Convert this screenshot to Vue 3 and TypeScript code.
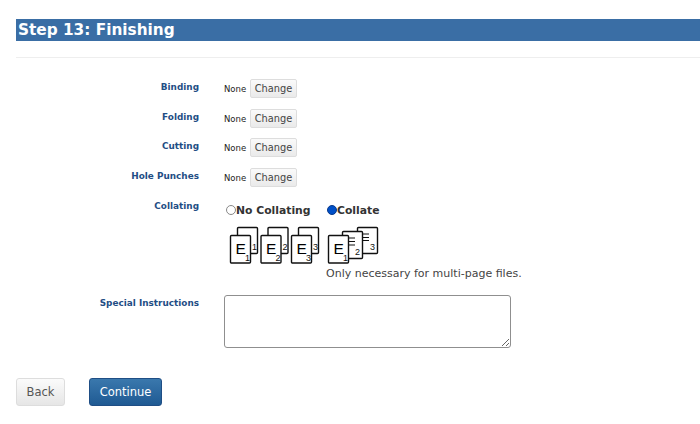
<template>
  <div class="page">
    <h2 class="step-title">Step 13: Finishing</h2>
    <hr class="divider" />

    <form class="form" @submit.prevent>
      <div v-for="opt in options" :key="opt" class="row">
        <label class="row-label">{{ opt }}</label>
        <div class="row-value">
          <span class="none">None</span>
          <button type="button" class="btn-change">Change</button>
        </div>
      </div>

      <div class="row row-collate">
        <label class="row-label">Collating</label>
        <div class="collate">
          <div class="collate-opt">
            <label class="radio-label"><span class="radio"></span>No Collating</label>
            <svg class="pages" width="92" height="39" viewBox="0 0 92 39">
              <g v-for="(n, i) in [1, 2, 3]" :key="n" :transform="`translate(${i * 30.5} 0)`">
                <rect class="sheet" x="8.5" y="1.5" width="20" height="26" rx="1" />
                <text class="num" x="23" y="24">{{ n }}</text>
                <rect class="sheet" x="1.5" y="9.5" width="20" height="27.5" rx="1" />
                <text class="big" x="6.5" y="28">E</text>
                <text class="num" x="16" y="35">{{ n }}</text>
              </g>
            </svg>
          </div>
          <div class="collate-opt">
            <label class="radio-label"><span class="radio on"></span>Collate</label>
            <svg class="pages" width="52" height="39" viewBox="0 0 52 39">
              <rect class="sheet" x="30.5" y="1.5" width="20" height="26" rx="1" />
              <path class="line" d="M36 8h6M36 11.5h6M36 14.5h6" />
              <text class="num" x="43" y="24">3</text>
              <rect class="sheet" x="15.5" y="5.5" width="20" height="27" rx="1" />
              <path class="line" d="M22 12h6M22 15.5h6M22 19h6" />
              <text class="num" x="28" y="29">2</text>
              <rect class="sheet" x="1.5" y="9.5" width="20" height="27.5" rx="1" />
              <text class="big" x="6.5" y="28">E</text>
              <text class="num" x="16" y="35">1</text>
            </svg>
            <p class="note">Only necessary for multi-page files.</p>
          </div>
        </div>
      </div>

      <div class="row row-notes">
        <label class="row-label">Special Instructions</label>
        <textarea class="notes"></textarea>
      </div>

      <div class="actions">
        <button type="button" class="btn btn-back">Back</button>
        <button type="submit" class="btn btn-continue">Continue</button>
      </div>
    </form>
  </div>
</template>

<script setup lang="ts">
const options: string[] = ['Binding', 'Folding', 'Cutting', 'Hole Punches']
</script>

<style>
html,
body {
  background: #ffffff;
}
</style>

<style scoped>
.page {
  width: 700px;
  height: 424px;
  overflow: hidden;
  padding: 19px 0 0 16px;
  box-sizing: border-box;
  font-family: 'DejaVu Sans', Verdana, sans-serif;
  color: #222222;
}

.step-title {
  margin: 0;
  height: 22px;
  line-height: 23px;
  padding-left: 2px;
  background: #3a6ea5;
  color: #ffffff;
  font-size: 15.3px;
  font-weight: 700;
}

.divider {
  height: 1px;
  margin: 16px 0 0;
  border: 0;
  background: #eeeeee;
}

.form {
  padding-top: 21px;
}

.row {
  display: grid;
  grid-template-columns: 183px minmax(0, 1fr);
  column-gap: 25px;
  height: 29.7px;
}

.row-label {
  text-align: right;
  font-size: 8.9px;
  font-weight: 700;
  line-height: 17px;
  color: #1f4e85;
}

.row-value {
  display: flex;
  align-items: flex-start;
  gap: 4px;
}

.none {
  width: 22px;
  white-space: nowrap;
  font-size: 8.5px;
  line-height: 21px;
  color: #222222;
}

.btn-change {
  width: 47px;
  height: 19px;
  padding: 0;
  border: 1px solid #dddddd;
  border-radius: 2px;
  background: linear-gradient(#fafafa, #eaeaea);
  font-family: inherit;
  font-size: 9.8px;
  color: #444444;
}

.row-collate {
  height: 97px;
}

.collate {
  display: flex;
  gap: 6px;
  padding: 4px 0 0 2px;
}

.radio-label {
  display: flex;
  align-items: center;
  height: 18px;
  font-size: 10.8px;
  font-weight: 700;
  color: #333333;
}

.radio {
  width: 10px;
  height: 10px;
  box-sizing: border-box;
  border: 1px solid #888888;
  border-radius: 50%;
  margin-top: -2px;
}

.radio.on {
  border-color: #0a3a8a;
  background: #0050c8;
}

.pages {
  display: block;
  margin: 6px 0 0 3px;
}

.collate-opt:last-child .pages {
  margin-left: 0;
}

.sheet {
  fill: #ffffff;
  stroke: #111111;
  stroke-width: 1.4;
}

.line {
  stroke: #111111;
  stroke-width: 1.2;
  fill: none;
}

.big {
  font-family: 'Liberation Sans', Arial, sans-serif;
  font-size: 15.5px;
  fill: #000000;
}

.num {
  font-family: 'Liberation Sans', Arial, sans-serif;
  font-size: 9px;
  fill: #111111;
}

.note {
  margin: 2px 0 0 -1px;
  white-space: nowrap;
  font-size: 11px;
  color: #444444;
}

.row-notes {
  height: 83px;
}

.notes {
  width: 287px;
  height: 53px;
  box-sizing: border-box;
  border: 1px solid #8f8f8f;
  border-radius: 3px;
  margin: 0;
  display: block;
}

.actions {
  display: flex;
  gap: 24px;
}

.btn {
  height: 28px;
  border-radius: 3px;
  font-family: inherit;
  font-size: 11.5px;
  padding: 0;
}

.btn-back {
  width: 49px;
  border: 1px solid #dddddd;
  background: linear-gradient(#fbfbfb, #e6e6e6);
  color: #555555;
}

.btn-continue {
  width: 73px;
  border: 1px solid #1f4e85;
  background: linear-gradient(#3a78ad, #1f5a93);
  color: #ffffff;
}
</style>
